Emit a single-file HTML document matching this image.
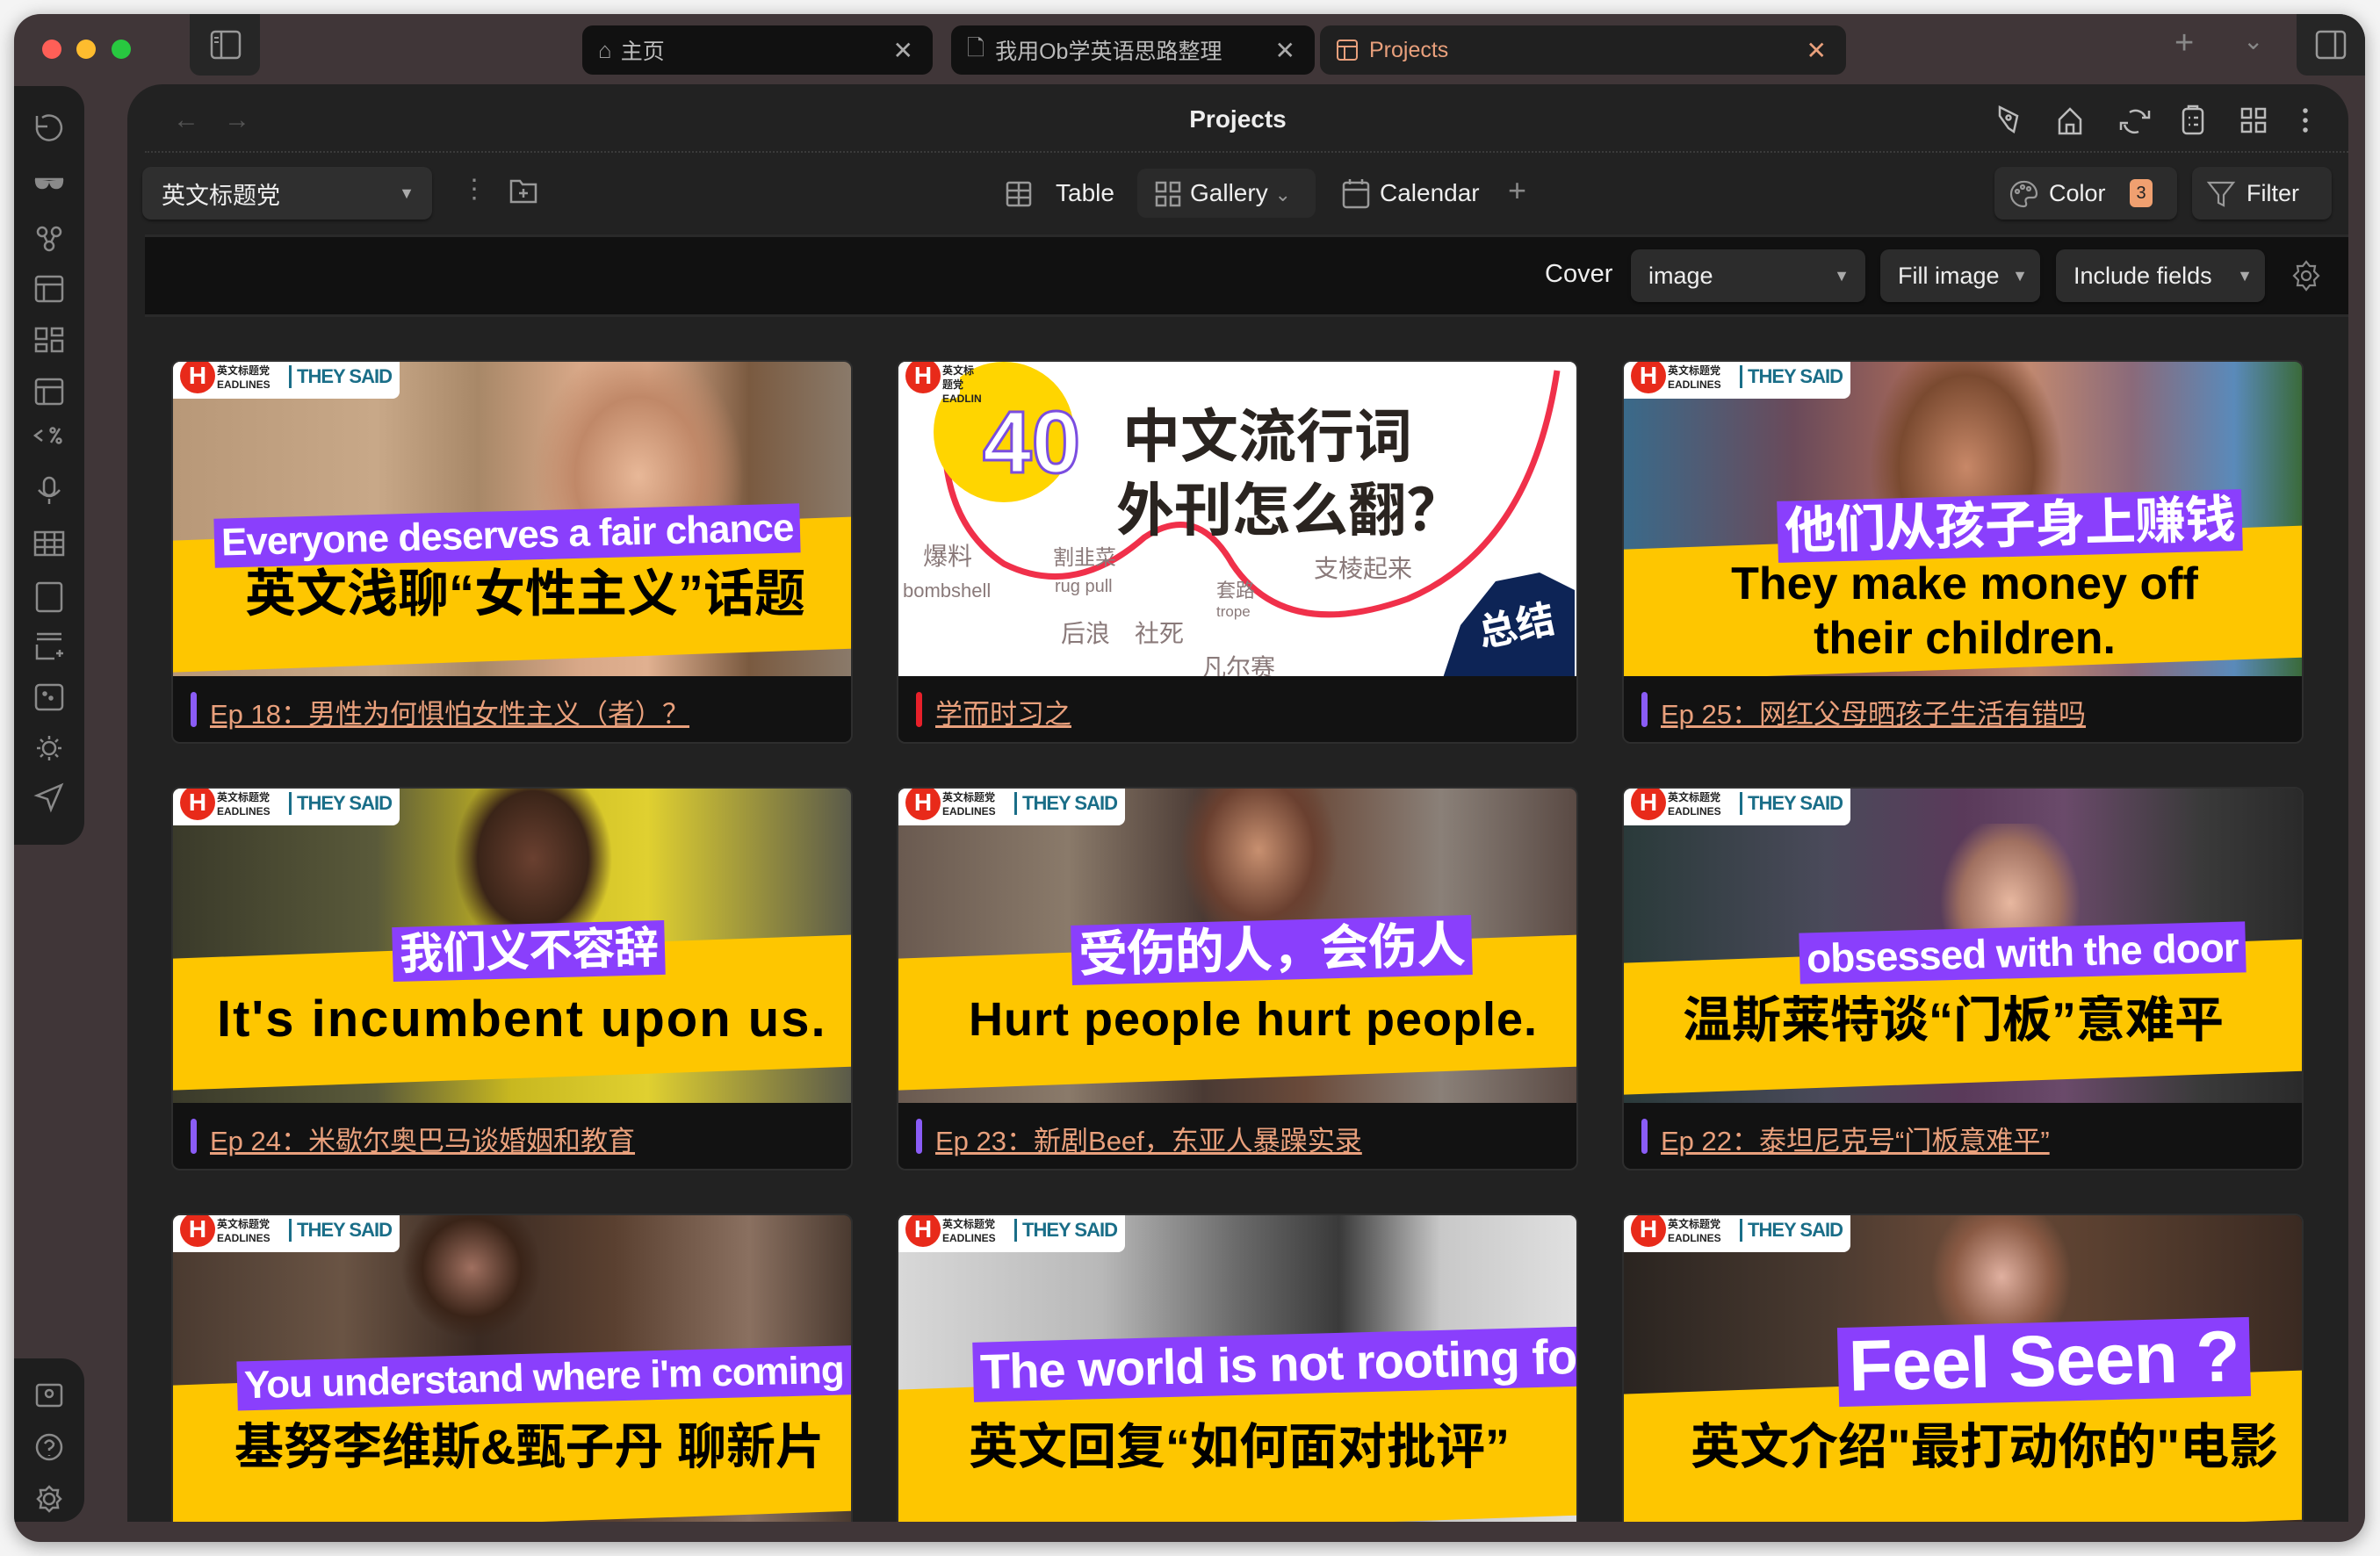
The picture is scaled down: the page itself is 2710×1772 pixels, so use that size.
<!DOCTYPE html>
<html><head><meta charset="utf-8">
<style>
*{box-sizing:border-box;margin:0;padding:0}
html,body{width:2710px;height:1772px;overflow:hidden}
body{background:#f4f4f4;position:relative;font-family:"Liberation Sans","Noto Sans CJK SC",sans-serif;color:#ddd}
.abs{position:absolute}
.win{left:16px;top:16px;width:2677px;height:1740px;background:#403638;border-radius:30px;box-shadow:0 4px 20px rgba(0,0,0,.35);overflow:hidden}
.dot{width:22px;height:22px;border-radius:50%;top:29px}
.tab{top:13px;height:56px;border-radius:12px;display:flex;align-items:center;font-size:25px;color:#bbb;padding-left:18px}
.tab .x{position:absolute;right:22px;top:12px;font-size:28px;color:#aaa}
.ribbon{background:#1e1e1e;border-radius:0 26px 26px 0}
.pane{left:129px;top:80px;width:2529px;height:1637px;background:#222;border-radius:40px 40px 0 0;overflow:hidden}
.btn{position:absolute;background:#2c2c2c;border-radius:10px;box-shadow:0 2px 3px rgba(0,0,0,.4);display:flex;align-items:center;font-size:27px;color:#eee}
.card{position:absolute;width:776px;background:#121212;border:2px solid #2e2e2e;border-radius:10px;overflow:hidden}
.thumb{position:relative;height:358px;overflow:hidden}
.ttl{position:absolute;left:20px;top:376px;font-size:31px;color:#e9a07c;text-decoration:underline;padding-left:22px;white-space:nowrap}
.ttl:before{content:"";position:absolute;left:0;top:0;width:7px;height:40px;border-radius:4px;background:#8a5cf6}
.ttl.red:before{background:#e8202a}
.yel{position:absolute;left:-10px;width:800px;background:#fec600;transform:rotate(-2deg)}
.pur{position:absolute;background:#8a3ffc;color:#fff;font-weight:bold;white-space:nowrap;line-height:1;padding:6px 8px;transform:rotate(-1.5deg);letter-spacing:-1px}
.blk{position:absolute;color:#000;font-weight:bold;white-space:nowrap;line-height:1}
.logo{position:absolute;left:0;top:0;width:258px;height:42px;background:#fff;border-radius:0 0 8px 0}
.logo .h{position:absolute;left:8px;top:-4px;width:40px;height:40px;border-radius:50%;background:#e82a1a;color:#fff;font-weight:bold;font-size:28px;text-align:center;line-height:40px}
.logo .s{position:absolute;left:50px;top:2px;font-size:12px;color:#222;font-weight:bold;line-height:16px}
.logo .t{position:absolute;left:132px;top:4px;font-size:22px;color:#1a6e88;font-weight:bold;border-left:3px solid #1a6e88;padding-left:6px;letter-spacing:-1px}
</style></head><body>
<div class="abs win">
  <div class="abs dot" style="left:32px;background:#fe5f57"></div>
  <div class="abs dot" style="left:71px;background:#febc2e"></div>
  <div class="abs dot" style="left:111px;background:#28c840"></div>
  <div class="abs" style="left:200px;top:0;width:80px;height:70px;background:#262626;border-radius:0 0 12px 12px"></div>
  <svg class="abs" style="left:223px;top:18px" width="36" height="34" viewBox="0 0 36 34"><rect x="2" y="2" width="32" height="30" rx="4" fill="none" stroke="#999" stroke-width="2.5"/><line x1="13" y1="2" x2="13" y2="32" stroke="#999" stroke-width="2.5"/><line x1="5" y1="9" x2="10" y2="9" stroke="#999" stroke-width="2"/><line x1="5" y1="14" x2="10" y2="14" stroke="#999" stroke-width="2"/></svg>
  <div class="abs tab" style="left:647px;width:399px;background:#111"><span style="color:#999;font-size:26px;margin-right:10px">⌂</span>主页<span class="x">✕</span></div>
  <div class="abs tab" style="left:1067px;width:414px;background:#111"><span style="color:#999;margin-right:12px">🗋</span>我用Ob学英语思路整理<span class="x">✕</span></div>
  <div class="abs tab" style="left:1487px;width:599px;background:#202020;color:#e9a07c"><svg width="26" height="26" style="margin-right:12px"><rect x="2" y="2" width="22" height="22" rx="3" fill="none" stroke="#e9a07c" stroke-width="2"/><line x1="2" y1="9" x2="24" y2="9" stroke="#e9a07c" stroke-width="2"/><line x1="10" y1="9" x2="10" y2="24" stroke="#e9a07c" stroke-width="2"/></svg>Projects<span class="x" style="color:#e9a07c">✕</span></div>
  <div class="abs" style="left:2460px;top:12px;font-size:38px;color:#888">+</div>
  <div class="abs" style="left:2538px;top:14px;font-size:28px;color:#888">⌄</div>
  <div class="abs" style="left:2599px;top:0;width:78px;height:70px;background:#262626;border-radius:0 0 0 12px"></div>
  <svg class="abs" style="left:2620px;top:18px" width="36" height="34"><rect x="2" y="2" width="32" height="30" rx="4" fill="none" stroke="#999" stroke-width="2.5"/><line x1="23" y1="2" x2="23" y2="32" stroke="#999" stroke-width="2.5"/></svg>

  <div class="abs ribbon" style="left:0;top:82px;width:80px;height:864px"></div>
  <div class="abs ribbon" style="left:0;top:1531px;width:80px;height:186px"></div>
  <svg class="abs" style="left:0;top:16px" width="80" height="1740" fill="none" stroke="#8a8a8a" stroke-width="2.5">
    <path d="M26 112 a14 14 0 1 0 6 -10 M26 100 v12 h12"/>
    <path d="M24 172 h32 M25 172 q0 10 7 10 q6 0 7-8 M41 174 q1 8 7 8 q7 0 7-10" fill="#8a8a8a"/>
    <circle cx="32" cy="232" r="5"/><circle cx="48" cy="232" r="5"/><circle cx="40" cy="248" r="5"/><path d="M34 236 l4 8 M46 236 l-4 8"/>
    <rect x="25" y="283" width="30" height="28" rx="3"/><path d="M25 292 h30 M34 292 v19"/>
    <rect x="25" y="342" width="12" height="12"/><rect x="43" y="342" width="12" height="8"/><rect x="25" y="360" width="12" height="8"/><rect x="43" y="356" width="12" height="12"/>
    <rect x="25" y="400" width="30" height="28" rx="3"/><path d="M25 409 h30 M34 409 v19"/>
    <path d="M32 458 l-8 6 l8 6 M52 456 l-10 16"/><circle cx="44" cy="458" r="2.5"/><circle cx="51" cy="470" r="2.5"/>
    <rect x="34" y="512" width="12" height="20" rx="6"/><path d="M28 526 q12 14 24 0 M40 536 v6"/>
    <rect x="24" y="574" width="32" height="26"/><path d="M24 583 h32 M24 591 h32 M35 574 v26 M46 574 v26"/>
    <rect x="26" y="632" width="28" height="32" rx="3"/>
    <path d="M26 690 h28 M26 696 h28 M26 702 v16 h20 M48 712 h8 M52 708 v8"/>
    <rect x="25" y="748" width="30" height="28" rx="4"/><circle cx="35" cy="758" r="1.5"/><circle cx="42" cy="763" r="1.5"/>
    <circle cx="40" cy="820" r="7"/><path d="M40 806 v4 M40 830 v4 M26 820 h4 M50 820 h4 M30 810 l3 3 M50 810 l-3 3 M30 830 l3-3 M50 830 l-3-3"/>
    <path d="M54 862 l-28 12 l12 4 l4 12 z"/>
    <g transform="translate(0,-15)">
    <rect x="26" y="1560" width="28" height="24" rx="3"/><circle cx="40" cy="1570" r="4"/>
    <circle cx="40" cy="1631" r="14"/><path d="M35 1627 q5-7 10 0 q0 4-5 6 v2 M40 1640 v1"/>
    <circle cx="40" cy="1690" r="6"/><path d="M40 1676 l4 4 h6 l-1 6 l4 4 l-4 4 l1 6 h-6 l-4 4 l-4-4 h-6 l1-6 l-4-4 l4-4 l-1-6 h6 z"/>
    </g>
  </svg>

  <div class="abs pane">
    <div class="abs" style="left:52px;top:24px;font-size:30px;color:#555">←</div>
    <div class="abs" style="left:110px;top:24px;font-size:30px;color:#555">→</div>
    <div class="abs" style="left:0;width:2529px;top:24px;text-align:center;font-size:28px;font-weight:bold;color:#eee">Projects</div>
    <svg class="abs" style="left:2120px;top:20px" width="380" height="40" fill="none" stroke="#bbb" stroke-width="2.5">
      <path d="M12 6 l20 10 l-4 18 l-6-4 l-10-14 z"/><circle cx="22" cy="18" r="2.5"/>
      <path d="M80 20 l12-12 l12 12 v16 h-24 z M88 36 v-10 h8 v10"/>
      <path d="M160 12 a12 12 0 0 1 18 6 M182 10 v8 h-8 M170 34 a12 12 0 0 1 -16 -8 M150 32 v-8 h8"/>
      <rect x="221" y="8" width="22" height="28" rx="4"/><path d="M227 8 v-3 h10 v3 M227 18 h2 M233 18 h5 M227 26 h2 M233 26 h5"/>
      <rect x="288" y="8" width="10" height="10"/><rect x="304" y="8" width="10" height="10"/><rect x="288" y="24" width="10" height="10"/><rect x="304" y="24" width="10" height="10"/>
      <circle cx="360" cy="10" r="1.5" fill="#bbb"/><circle cx="360" cy="21" r="1.5" fill="#bbb"/><circle cx="360" cy="32" r="1.5" fill="#bbb"/>
    </svg>
    <div class="abs" style="left:20px;top:76px;width:2509px;border-top:2px dotted #3a3a3a"></div>
    <div class="btn" style="left:17px;top:94px;width:330px;height:60px;padding-left:22px;background:#2f2f2f">英文标题党<span style="position:absolute;right:20px;font-size:18px;color:#aaa">▼</span></div>
    <div class="abs" style="left:380px;top:102px;font-size:30px;color:#888">⋮</div>
    <svg class="abs" style="left:434px;top:104px" width="34" height="34" fill="none" stroke="#999" stroke-width="2.5"><path d="M3 6 h10 l3 4 h15 v20 h-28 z M17 15 v10 M12 20 h10"/></svg>
    <svg class="abs" style="left:1000px;top:110px" width="30" height="30" fill="none" stroke="#999" stroke-width="2.5"><rect x="2" y="2" width="26" height="26" rx="2"/><path d="M2 11 h26 M2 19 h26 M15 2 v26"/></svg>
    <div class="abs" style="left:1057px;top:108px;font-size:28px;color:#eee">Table</div>
    <div class="abs" style="left:1150px;top:96px;width:203px;height:56px;background:#2a2a2a;border-radius:10px"></div>
    <svg class="abs" style="left:1170px;top:110px" width="30" height="30" fill="none" stroke="#999" stroke-width="2.5"><rect x="2" y="2" width="10" height="10"/><rect x="18" y="2" width="10" height="10"/><rect x="2" y="18" width="10" height="10"/><rect x="18" y="18" width="10" height="10"/></svg>
    <div class="abs" style="left:1210px;top:108px;font-size:28px;color:#eee">Gallery <span style="color:#999;font-size:22px">⌄</span></div>
    <svg class="abs" style="left:1383px;top:106px" width="32" height="36" fill="none" stroke="#999" stroke-width="2.5"><rect x="2" y="6" width="28" height="28" rx="3"/><path d="M2 14 h28 M9 2 v6 M23 2 v6"/></svg>
    <div class="abs" style="left:1426px;top:108px;font-size:28px;color:#eee">Calendar</div>
    <div class="abs" style="left:1572px;top:100px;font-size:36px;color:#888">+</div>
    <div class="btn" style="left:2126px;top:94px;width:208px;height:60px;padding-left:62px">Color<span style="position:absolute;left:154px;top:14px;width:26px;height:32px;background:#f0a070;border-radius:6px;color:#222;font-size:20px;text-align:center;line-height:32px">3</span></div>
    <svg class="abs" style="left:2142px;top:108px" width="34" height="34" fill="none" stroke="#999" stroke-width="2.2"><path d="M17 3 a14 14 0 1 0 0 28 q4 0 3-4 q-2-5 3-6 h5 q4 0 4-5 a14 14 0 0 0 -15 -13"/><circle cx="10" cy="14" r="2"/><circle cx="16" cy="9" r="2"/><circle cx="23" cy="11" r="2"/></svg>
    <div class="btn" style="left:2351px;top:94px;width:159px;height:60px;padding-left:62px">Filter</div>
    <svg class="abs" style="left:2367px;top:108px" width="34" height="34" fill="none" stroke="#999" stroke-width="2.2"><path d="M3 4 h28 l-11 14 v12 l-6 -3 v-9 z"/></svg>
    <div class="abs" style="left:20px;top:171px;width:2509px;height:94px;background:#111;border-top:3px solid #2a2a2a;border-bottom:3px solid #2a2a2a"></div>
    <div class="abs" style="left:1614px;top:200px;font-size:29px;color:#eee">Cover</div>
    <div class="btn" style="left:1712px;top:188px;width:267px;height:60px;padding-left:20px">image<span style="position:absolute;right:18px;font-size:18px;color:#aaa">▼</span></div>
    <div class="btn" style="left:1996px;top:188px;width:182px;height:60px;padding-left:20px">Fill image<span style="position:absolute;right:14px;font-size:18px;color:#aaa">▼</span></div>
    <div class="btn" style="left:2196px;top:188px;width:238px;height:60px;padding-left:20px">Include fields<span style="position:absolute;right:14px;font-size:18px;color:#aaa">▼</span></div>
    <svg class="abs" style="left:2464px;top:200px" width="34" height="36" fill="none" stroke="#888" stroke-width="2.2"><circle cx="17" cy="18" r="5"/><path d="M17 2 l4 5 h6 l-1 6 l5 5 l-5 5 l1 6 h-6 l-4 5 l-4-5 h-6 l1-6 l-5-5 l5-5 l-1-6 h6 z"/></svg>
  </div>
</div>

<!-- Cards row 1 -->
<div class="card" style="left:195px;top:410px;height:437px">
  <div class="thumb" style="background:linear-gradient(90deg,#b89878 0%,#c8a888 30%,#a88868 45%,#d8a888 60%,#e0b090 70%,#7a5a40 85%,#8a7a6a 100%)">
    <div class="abs" style="left:380px;top:0;width:300px;height:360px;background:radial-gradient(ellipse 120px 150px at 150px 130px,#e8b898,#c08868 60%,rgba(100,60,40,0) 100%)"></div>
    <div class="yel" style="top:190px;height:150px"></div>
    <div class="pur" style="left:47px;top:170px;font-size:44px">Everyone deserves a fair chance</div>
    <div class="blk" style="left:82px;top:236px;font-size:58px">英文浅聊“女性主义”话题</div>
    <div class="logo"><div class="h">H</div><div class="s">英文标题党<br>EADLINES</div><div class="t">THEY SAID</div></div>
  </div>
  <div class="ttl">Ep 18：男性为何惧怕女性主义（者）？</div>
</div>
<div class="card" style="left:1021px;top:410px;height:437px">
  <div class="thumb" style="background:#fff">
    <svg class="abs" style="left:0;top:0" width="776" height="358" fill="none"><path d="M60 10 q-30 160 60 220 q80 40 160 -30 q60 -40 100 30 q60 90 200 40 q140 -60 170 -260" stroke="#f0304a" stroke-width="7"/><path d="M640 300 l40 -50 l50 -10 l40 20 v100 h-150 z" fill="#0d2456"/><circle cx="120" cy="80" r="80" fill="#ffd500"/></svg>
    <div class="blk" style="left:96px;top:42px;font-size:100px;color:#fff;-webkit-text-stroke:3px #7a4de0">40</div>
    <div class="blk" style="left:255px;top:52px;font-size:66px;color:#2a2420">中文流行词</div>
    <div class="blk" style="left:248px;top:136px;font-size:66px;color:#2a2420">外刊怎么翻？</div>
    <div class="blk" style="left:28px;top:208px;font-size:28px;color:#8a7a7a;font-weight:normal">爆料</div>
    <div class="blk" style="left:5px;top:250px;font-size:22px;color:#8a7a7a;font-weight:normal">bombshell</div>
    <div class="blk" style="left:176px;top:212px;font-size:24px;color:#8a7a7a;font-weight:normal">割韭菜</div>
    <div class="blk" style="left:178px;top:246px;font-size:20px;color:#8a7a7a;font-weight:normal">rug pull</div>
    <div class="blk" style="left:362px;top:250px;font-size:22px;color:#8a7a7a;font-weight:normal">套路<br><span style="font-size:17px">trope</span></div>
    <div class="blk" style="left:473px;top:222px;font-size:28px;color:#8a7a7a;font-weight:normal">支棱起来</div>
    <div class="blk" style="left:185px;top:296px;font-size:28px;color:#8a7a7a;font-weight:normal">后浪　社死</div>
    <div class="blk" style="left:345px;top:335px;font-size:28px;color:#8a7a7a;font-weight:normal">凡尔赛</div>
    <div class="blk" style="left:660px;top:280px;font-size:44px;color:#fff;transform:rotate(-12deg)">总结</div>
    <div class="logo" style="width:70px;background:#fff"><div class="h">H</div><div class="s">英文标题党<br>EADLIN</div></div>
  </div>
  <div class="ttl red">学而时习之</div>
</div>
<div class="card" style="left:1847px;top:410px;height:437px">
  <div class="thumb" style="background:linear-gradient(90deg,#3a6a8a 0%,#6a4a5a 25%,#a86a5a 45%,#c08870 60%,#8a6a7a 75%,#5a8aba 90%,#3a6a3a 100%)">
    <div class="abs" style="left:250px;top:0;width:280px;height:360px;background:radial-gradient(ellipse 110px 150px at 140px 120px,#c88868,#7a4a30 70%,rgba(0,0,0,0) 100%)"></div>
    <div class="yel" style="top:200px;height:150px"></div>
    <div class="pur" style="left:175px;top:152px;font-size:58px">他们从孩子身上赚钱</div>
    <div class="blk" style="left:0;width:776px;text-align:center;top:222px;font-size:52px;line-height:62px">They make money off<br>their children.</div>
    <div class="logo"><div class="h">H</div><div class="s">英文标题党<br>EADLINES</div><div class="t">THEY SAID</div></div>
  </div>
  <div class="ttl">Ep 25：网红父母晒孩子生活有错吗</div>
</div>

<!-- Row 2 -->
<div class="card" style="left:195px;top:896px;height:437px">
  <div class="thumb" style="background:linear-gradient(90deg,#3a3a2a 0%,#5a5a3a 30%,#c8b820 50%,#e0d030 70%,#5a5a4a 100%)">
    <div class="abs" style="left:300px;top:0;width:220px;height:200px;background:radial-gradient(ellipse 90px 110px at 110px 80px,#6a4030,#3a2418 70%,rgba(0,0,0,0) 100%)"></div>
    <div class="yel" style="top:180px;height:150px"></div>
    <div class="pur" style="left:250px;top:154px;font-size:50px">我们义不容辞</div>
    <div class="blk" style="left:50px;top:234px;font-size:58px;letter-spacing:2px">It's incumbent upon us.</div>
    <div class="logo"><div class="h">H</div><div class="s">英文标题党<br>EADLINES</div><div class="t">THEY SAID</div></div>
  </div>
  <div class="ttl">Ep 24：米歇尔奥巴马谈婚姻和教育</div>
</div>
<div class="card" style="left:1021px;top:896px;height:437px">
  <div class="thumb" style="background:linear-gradient(90deg,#6a5a50 0%,#8a7a6a 25%,#4a3a34 45%,#6a4a3a 60%,#8a8078 80%,#5a4a44 100%)">
    <div class="abs" style="left:300px;top:0;width:220px;height:200px;background:radial-gradient(ellipse 90px 110px at 110px 70px,#c89070,#6a4030 70%,rgba(0,0,0,0) 100%)"></div>
    <div class="yel" style="top:180px;height:150px"></div>
    <div class="pur" style="left:197px;top:150px;font-size:56px">受伤的人，会伤人</div>
    <div class="blk" style="left:80px;top:236px;font-size:54px;letter-spacing:1px">Hurt people hurt people.</div>
    <div class="logo"><div class="h">H</div><div class="s">英文标题党<br>EADLINES</div><div class="t">THEY SAID</div></div>
  </div>
  <div class="ttl">Ep 23：新剧Beef，东亚人暴躁实录</div>
</div>
<div class="card" style="left:1847px;top:896px;height:437px">
  <div class="thumb" style="background:linear-gradient(90deg,#2a3a3a 0%,#4a4a5a 30%,#5a3a5a 50%,#6a4a6a 65%,#3a3a3a 85%,#2a2a2a 100%)">
    <div class="abs" style="left:340px;top:40px;width:200px;height:200px;background:radial-gradient(ellipse 80px 100px at 100px 90px,#e8b8a0,#a07060 70%,rgba(0,0,0,0) 100%)"></div>
    <div class="yel" style="top:185px;height:150px"></div>
    <div class="pur" style="left:200px;top:158px;font-size:46px">obsessed with the door</div>
    <div class="blk" style="left:67px;top:236px;font-size:56px">温斯莱特谈“门板”意难平</div>
    <div class="logo"><div class="h">H</div><div class="s">英文标题党<br>EADLINES</div><div class="t">THEY SAID</div></div>
  </div>
  <div class="ttl">Ep 22：泰坦尼克号“门板意难平”</div>
</div>

<!-- Row 3 -->
<div class="card" style="left:195px;top:1382px;height:351px;border-bottom:none;border-radius:10px 10px 0 0">
  <div class="thumb" style="background:linear-gradient(90deg,#4a3a30 0%,#6a5444 25%,#3a2a22 45%,#5a4030 65%,#8a7060 85%,#4a3a30 100%)">
    <div class="abs" style="left:240px;top:0;width:200px;height:160px;background:radial-gradient(ellipse 80px 80px at 100px 60px,#a07060,#3a2418 70%,rgba(0,0,0,0) 100%)"></div>
    <div class="yel" style="top:180px;height:170px"></div>
    <div class="pur" style="left:73px;top:156px;font-size:44px">You understand where i'm coming from</div>
    <div class="blk" style="left:70px;top:236px;font-size:56px">基努李维斯&amp;甄子丹 聊新片</div>
    <div class="logo"><div class="h">H</div><div class="s">英文标题党<br>EADLINES</div><div class="t">THEY SAID</div></div>
  </div>
</div>
<div class="card" style="left:1021px;top:1382px;height:351px;border-bottom:none;border-radius:10px 10px 0 0">
  <div class="thumb" style="background:linear-gradient(90deg,#d8d8d8 0%,#b8b8b8 30%,#6a6a6a 50%,#3a3a3a 65%,#c8c8c8 80%,#e0e0e0 100%)">
    <div class="yel" style="top:185px;height:170px"></div>
    <div class="pur" style="left:85px;top:134px;font-size:56px">The world is not rooting for you</div>
    <div class="blk" style="left:80px;top:236px;font-size:56px">英文回复“如何面对批评”</div>
    <div class="logo"><div class="h">H</div><div class="s">英文标题党<br>EADLINES</div><div class="t">THEY SAID</div></div>
  </div>
</div>
<div class="card" style="left:1847px;top:1382px;height:351px;border-bottom:none;border-radius:10px 10px 0 0">
  <div class="thumb" style="background:linear-gradient(90deg,#2a2420 0%,#4a3a30 30%,#6a4a38 50%,#5a4030 70%,#3a2a22 100%)">
    <div class="abs" style="left:330px;top:0;width:200px;height:170px;background:radial-gradient(ellipse 80px 90px at 100px 70px,#e0b0a0,#8a5a44 70%,rgba(0,0,0,0) 100%)"></div>
    <div class="yel" style="top:190px;height:170px"></div>
    <div class="pur" style="left:244px;top:122px;font-size:82px;padding:4px 12px">Feel Seen ?</div>
    <div class="blk" style="left:76px;top:236px;font-size:56px">英文介绍"最打动你的"电影</div>
    <div class="logo"><div class="h">H</div><div class="s">英文标题党<br>EADLINES</div><div class="t">THEY SAID</div></div>
  </div>
</div>
</body></html>
